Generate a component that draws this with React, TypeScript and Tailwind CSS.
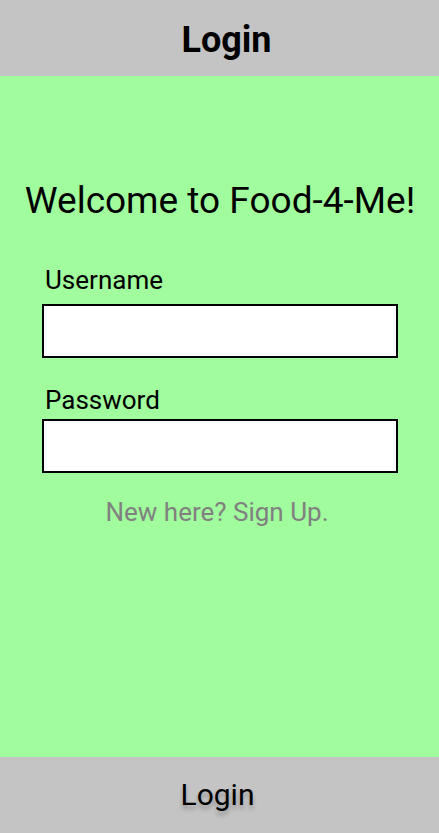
export default function App() {
  return (
    <div className="flex h-[833px] w-full flex-col bg-[#a0fc9c] [font-family:Roboto,'Liberation_Sans',sans-serif]">
      <header className="flex h-[76px] shrink-0 items-center justify-center bg-[#c4c4c4] pt-[4px]">
        <h1 className="ml-[14px] text-[36px] font-bold leading-[36px] text-black">Login</h1>
      </header>
      <main className="flex flex-1 flex-col pl-[42px] pr-[41px] pt-[106px]">
        <h2 className="-mx-[30px] text-center text-[37px] leading-[37px] text-black">Welcome to Food-4-Me!</h2>
        <label className="mt-[48px] pl-[3px] text-[26px] leading-[26px] text-black">Username</label>
        <input className="mt-[11px] h-[54px] w-full border-2 border-black bg-white outline-none" type="text" />
        <label className="mt-[29px] pl-[3px] text-[26px] leading-[26px] text-black">Password</label>
        <input className="mt-[6px] h-[54px] w-full border-2 border-black bg-white outline-none" type="password" />
        <p className="mt-[26px] pr-[6px] text-center text-[26px] leading-[26px] text-[#808080]">New here? Sign Up.</p>
      </main>
      <footer className="flex h-[76px] shrink-0 items-center justify-center bg-[#c4c4c4]">
        <span className="mr-[4px] text-[30px] leading-[30px] text-black [text-shadow:0_4px_4px_rgba(0,0,0,0.25)]">Login</span>
      </footer>
    </div>
  );
}
